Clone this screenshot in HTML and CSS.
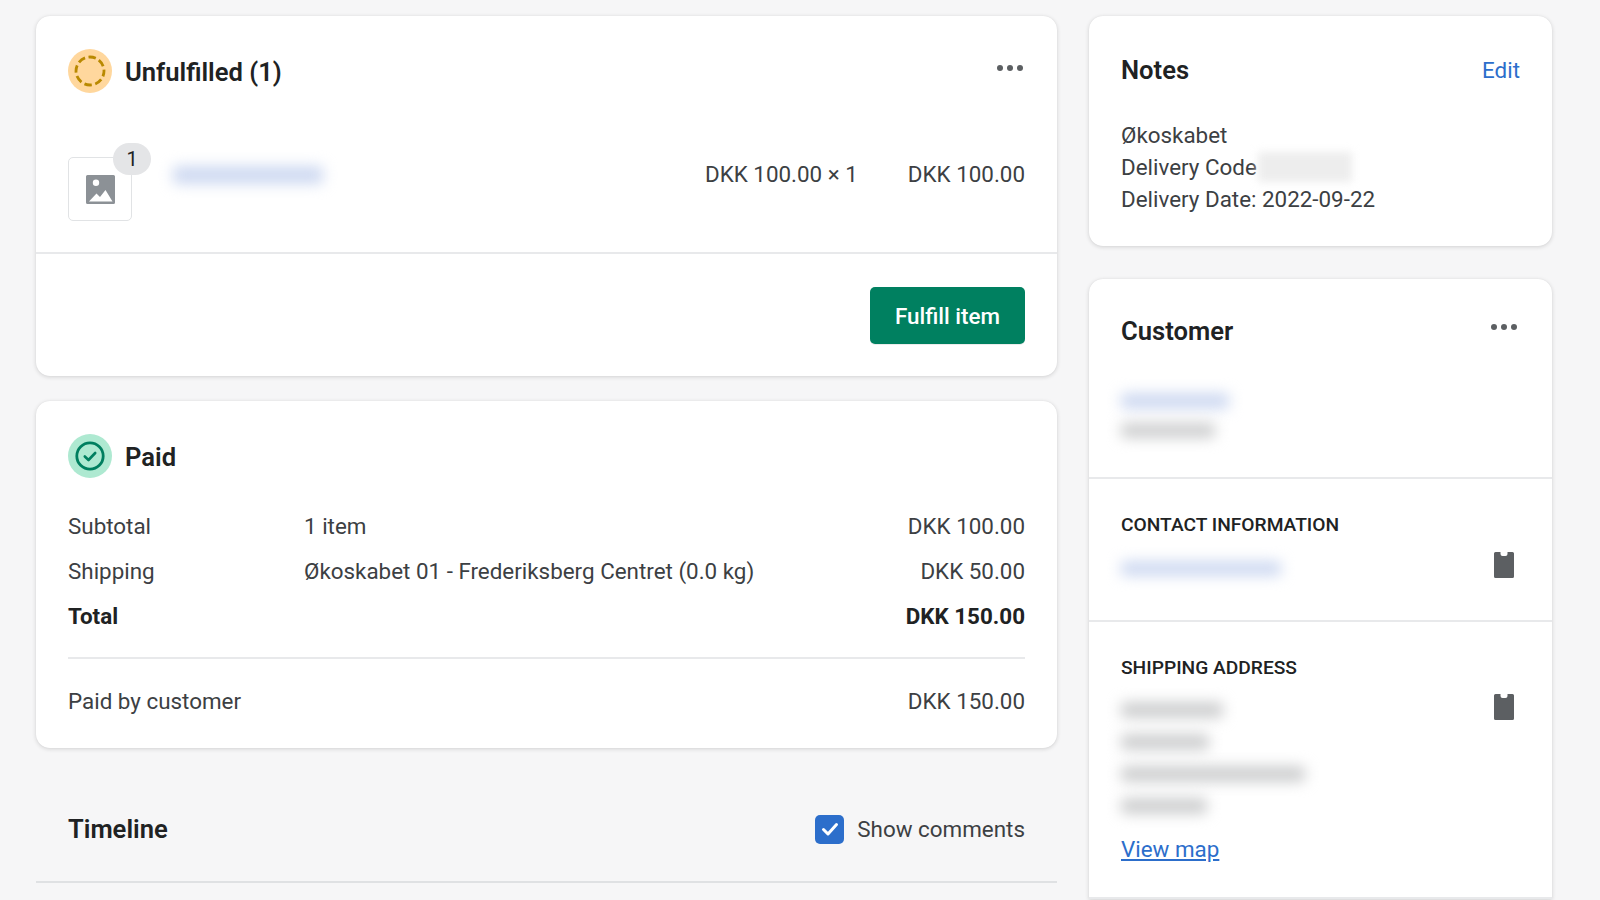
FILE: index.html
```html
<!DOCTYPE html>
<html lang="en">
<head>
    <meta charset="UTF-8">
    <meta name="viewport" content="width=device-width, initial-scale=1.0">
    <title>Order</title>
    <link rel="stylesheet" href="styles.css">
</head>
<body>
    <div class="layout">
        <div class="main">
            <div class="card">
                <div class="section section-items">
                    <div class="card-header">
                        <div class="status-title">
                            <span class="status-icon status-icon-pending">
                                <svg width="32" height="32" viewBox="0 0 32 32"><circle cx="16" cy="16" r="14" fill="none" stroke="#b98900" stroke-width="2.800" stroke-dasharray="7.500 3.500" stroke-dashoffset="2"/></svg>
                            </span>
                            <h2>Unfulfilled (1)</h2>
                        </div>
                        <svg class="dots" width="26" height="6" viewBox="0 0 26 6"><circle cx="3" cy="3" r="3"/><circle cx="13" cy="3" r="3"/><circle cx="23" cy="3" r="3"/></svg>
                    </div>
                    <div class="line-item">
                        <div class="thumb">
                            <svg width="29" height="29" viewBox="0 0 29 29"><path fill="#8c9196" fill-rule="evenodd" d="M1.500 0h26A1.500 1.500 0 0 1 29 1.500v26a1.500 1.500 0 0 1-1.500 1.500h-26A1.500 1.500 0 0 1 0 27.500v-26A1.500 1.500 0 0 1 1.500 0zM10 11a3.200 3.200 0 1 0 0-6.400 3.200 3.200 0 0 0 0 6.400zM3 26.500h23.500l-7-11.500-5.500 7-3.500-3.500z"/></svg>
                            <span class="qty-badge">1</span>
                        </div>
                        <div class="blur blur-link item-name"></div>
                        <span class="item-price">DKK 100.00 × 1</span>
                        <span class="item-total">DKK 100.00</span>
                    </div>
                </div>
                <div class="actions">
                    <button class="btn-primary">Fulfill item</button>
                </div>
            </div>

            <div class="card">
                <div class="section section-paid">
                    <div class="status-title">
                        <span class="status-icon status-icon-paid">
                            <svg width="30" height="30" viewBox="0 0 30 30"><circle cx="15" cy="15" r="13.200" fill="none" stroke="#007f5f" stroke-width="2.800"/><path d="M9.800 15.500l3.700 3.500 6.700-7" fill="none" stroke="#007f5f" stroke-width="2.600" stroke-linecap="round" stroke-linejoin="round"/></svg>
                        </span>
                        <h2>Paid</h2>
                    </div>
                    <div class="summary">
                        <div class="summary-row">
                            <span class="summary-label">Subtotal</span>
                            <span class="summary-desc">1 item</span>
                            <span>DKK 100.00</span>
                        </div>
                        <div class="summary-row">
                            <span class="summary-label">Shipping</span>
                            <span class="summary-desc">Økoskabet 01 - Frederiksberg Centret (0.0 kg)</span>
                            <span>DKK 50.00</span>
                        </div>
                        <div class="summary-row summary-total">
                            <span class="summary-label">Total</span>
                            <span class="summary-desc"></span>
                            <span>DKK 150.00</span>
                        </div>
                    </div>
                    <div class="paid-by">
                        <span>Paid by customer</span>
                        <span>DKK 150.00</span>
                    </div>
                </div>
            </div>

            <div class="timeline">
                <h2>Timeline</h2>
                <label class="show-comments">
                    <span class="checkbox">
                        <svg width="20" height="20" viewBox="0 0 20 20"><path d="M3.500 10.500l4.500 4.500 8.500-9.500" fill="none" stroke="#fff" stroke-width="3" stroke-linecap="round" stroke-linejoin="round"/></svg>
                    </span>
                    Show comments
                </label>
            </div>
        </div>

        <div class="side">
            <div class="card">
                <div class="section notes">
                    <div class="card-header">
                        <h3>Notes</h3>
                        <a class="link" href="#">Edit</a>
                    </div>
                    <div class="notes-body">
                        <div>Økoskabet</div>
                        <div class="code-line">Delivery Code<span class="code-smudge"></span></div>
                        <div>Delivery Date: 2022-09-22</div>
                    </div>
                </div>
            </div>

            <div class="card">
                <div class="section customer">
                    <div class="card-header">
                        <h3>Customer</h3>
                        <svg class="dots" width="26" height="6" viewBox="0 0 26 6"><circle cx="3" cy="3" r="3"/><circle cx="13" cy="3" r="3"/><circle cx="23" cy="3" r="3"/></svg>
                    </div>
                    <div class="blur blur-link customer-name"></div>
                    <div class="blur blur-grey customer-orders"></div>
                </div>
                <div class="section contact">
                    <div class="info-head">CONTACT INFORMATION</div>
                    <div class="info-row">
                        <div class="blur blur-link contact-mail"></div>
                        <svg class="clip" width="20" height="26" viewBox="0 0 20 26"><path d="M1.500 0H6.500V2a2 2 0 0 0 2 2h3a2 2 0 0 0 2-2V0h5A1.500 1.500 0 0 1 20 1.500V24.500a1.500 1.500 0 0 1-1.500 1.500H1.500A1.500 1.500 0 0 1 0 24.500V1.500A1.500 1.500 0 0 1 1.500 0z"/></svg>
                    </div>
                </div>
                <div class="section shipping">
                    <div class="info-head">SHIPPING ADDRESS</div>
                    <div class="info-row">
                        <div class="address">
                            <div class="blur blur-grey addr addr-1"></div>
                            <div class="blur blur-grey addr addr-2"></div>
                            <div class="blur blur-grey addr addr-3"></div>
                            <div class="blur blur-grey addr addr-4"></div>
                        </div>
                        <svg class="clip" width="20" height="26" viewBox="0 0 20 26"><path d="M1.500 0H6.500V2a2 2 0 0 0 2 2h3a2 2 0 0 0 2-2V0h5A1.500 1.500 0 0 1 20 1.500V24.500a1.500 1.500 0 0 1-1.500 1.500H1.500A1.500 1.500 0 0 1 0 24.500V1.500A1.500 1.500 0 0 1 1.500 0z"/></svg>
                    </div>
                    <a class="link view-map" href="#">View map</a>
                </div>
            </div>
        </div>
    </div>
</body>
</html>
```

FILE: styles.css
```css
* {
    margin: 0;
    padding: 0;
    box-sizing: border-box;
}

body {
    font-family: Roboto, "Liberation Sans", sans-serif;
    font-size: 22.4px;
    line-height: 32px;
    color: #3c4043;
    background: #f6f6f7;
    height: 900px;
    overflow: hidden;
}

.layout {
    display: flex;
    gap: 32px;
    padding: 16px 48px 0 36px;
    align-items: flex-start;
}

.main {
    width: 1021px;
    display: flex;
    flex-direction: column;
    gap: 25px;
}

.side {
    width: 463px;
    display: flex;
    flex-direction: column;
    gap: 33px;
}

.card {
    background: #fff;
    border-radius: 14px;
    box-shadow: 0 1px 4px rgba(23, 24, 24, 0.16), 0 0 1px rgba(23, 24, 24, 0.08);
}

.side .card:last-child {
    border-radius: 14px 14px 0 0;
}

.section {
    padding: 32px;
}

h2,
h3 {
    font-size: 25.6px;
    font-weight: 600;
    color: #202223;
}

.card-header {
    display: flex;
    justify-content: space-between;
    align-items: flex-start;
}

.status-title {
    display: flex;
    align-items: center;
    gap: 13px;
}

.status-title h2 {
    padding-top: 2px;
}

.status-icon {
    width: 44px;
    height: 44px;
    border-radius: 50%;
    display: flex;
    align-items: center;
    justify-content: center;
}

.status-icon-pending {
    background: #ffd79d;
}

.status-icon-paid {
    background: #aee9d1;
}

.dots {
    fill: #5c5f62;
    margin-top: 16px;
    margin-right: 2px;
}

.section-items {
    padding-top: 33px;
    padding-bottom: 31px;
}

.line-item {
    display: flex;
    align-items: center;
    margin-top: 64px;
    height: 64px;
}

.thumb {
    position: relative;
    width: 64px;
    height: 64px;
    border: 1px solid #e1e3e5;
    border-radius: 5px;
    display: flex;
    align-items: center;
    justify-content: center;
}

.qty-badge {
    position: absolute;
    top: -15px;
    left: 44px;
    width: 38px;
    height: 32px;
    border-radius: 16px;
    background: #e4e5e7;
    text-align: center;
    font-size: 20px;
    line-height: 32px;
    color: #202223;
}

.blur {
    filter: blur(7px);
    border-radius: 4px;
}

.blur-link {
    background: #ced9f1;
}

.blur-grey {
    background: #cdcecf;
}

.item-name {
    width: 150px;
    height: 18px;
    margin: -29px 0 0 41px;
}

.item-price {
    margin: -30px 0 0 auto;
}

.item-total {
    margin: -30px 0 0 50px;
}

.actions {
    border-top: 2px solid #e8e9eb;
    padding: 33px 32px 32px;
    display: flex;
    justify-content: flex-end;
}

.btn-primary {
    width: 155px;
    height: 57px;
    border: none;
    border-radius: 5px;
    background: #008060;
    color: #fff;
    font-family: inherit;
    font-size: 22.4px;
    font-weight: 500;
    box-shadow: 0 1px 0 rgba(0, 0, 0, 0.08);
}

.section-paid {
    padding-top: 33px;
    padding-bottom: 31px;
}

.summary {
    margin-top: 26px;
    padding-bottom: 19px;
    border-bottom: 2px solid #e8e9eb;
}

.summary-row {
    display: flex;
    height: 44.8px;
    align-items: center;
}

.summary-label {
    width: 236px;
}

.summary-desc {
    flex: 1;
}

.summary-total {
    font-weight: 700;
    color: #202223;
}

.paid-by {
    display: flex;
    justify-content: space-between;
    margin-top: 26px;
}

.timeline {
    display: flex;
    justify-content: space-between;
    align-items: center;
    height: 110px;
    padding: 4px 32px 0;
    border-bottom: 2px solid #dfe1e3;
}

.show-comments {
    display: flex;
    align-items: center;
    gap: 13px;
}

.checkbox {
    width: 29px;
    height: 29px;
    border-radius: 5px;
    background: #2c6ecb;
    display: flex;
    align-items: center;
    justify-content: center;
}

.link {
    color: #2c6ecb;
    text-decoration: none;
}

.notes {
    height: 230px;
    padding-top: 38px;
}

.notes-body {
    margin-top: 33px;
}

.code-line {
    position: relative;
}

.code-smudge {
    position: absolute;
    left: 137px;
    top: 1px;
    width: 94px;
    height: 30px;
    background: #ededed;
    filter: blur(4px);
}

.customer {
    height: 200px;
    border-bottom: 2px solid #e8e9eb;
    padding-top: 36px;
}

.customer .dots {
    margin-top: 9px;
    margin-right: 3px;
}

.customer-name {
    width: 108px;
    height: 16px;
    margin-top: 46px;
}

.customer-orders {
    width: 94px;
    height: 15px;
    margin-top: 14px;
}

.contact {
    height: 143px;
    border-bottom: 2px solid #e8e9eb;
}

.shipping {
    height: 277px;
    border-bottom: 2px solid #e8e9eb;
}

.info-head {
    font-size: 19.2px;
    font-weight: 500;
    line-height: 28px;
    color: #202223;
}

.info-row {
    display: flex;
    justify-content: space-between;
    align-items: flex-start;
    margin-top: 13px;
}

.clip {
    fill: #5c5f62;
    margin-right: 6px;
}

.contact-mail {
    width: 160px;
    height: 15px;
    margin-top: 9px;
}

.shipping .clip {
    margin-top: -1px;
}

.address {
    display: flex;
    flex-direction: column;
    gap: 16px;
    padding-top: 7px;
}

.addr {
    height: 16px;
}

.addr-1 { width: 102px; }
.addr-2 { width: 88px; }
.addr-3 { width: 184px; }
.addr-4 { width: 86px; }

.view-map {
    display: inline-block;
    margin-top: 19px;
    text-decoration: underline;
}
```
